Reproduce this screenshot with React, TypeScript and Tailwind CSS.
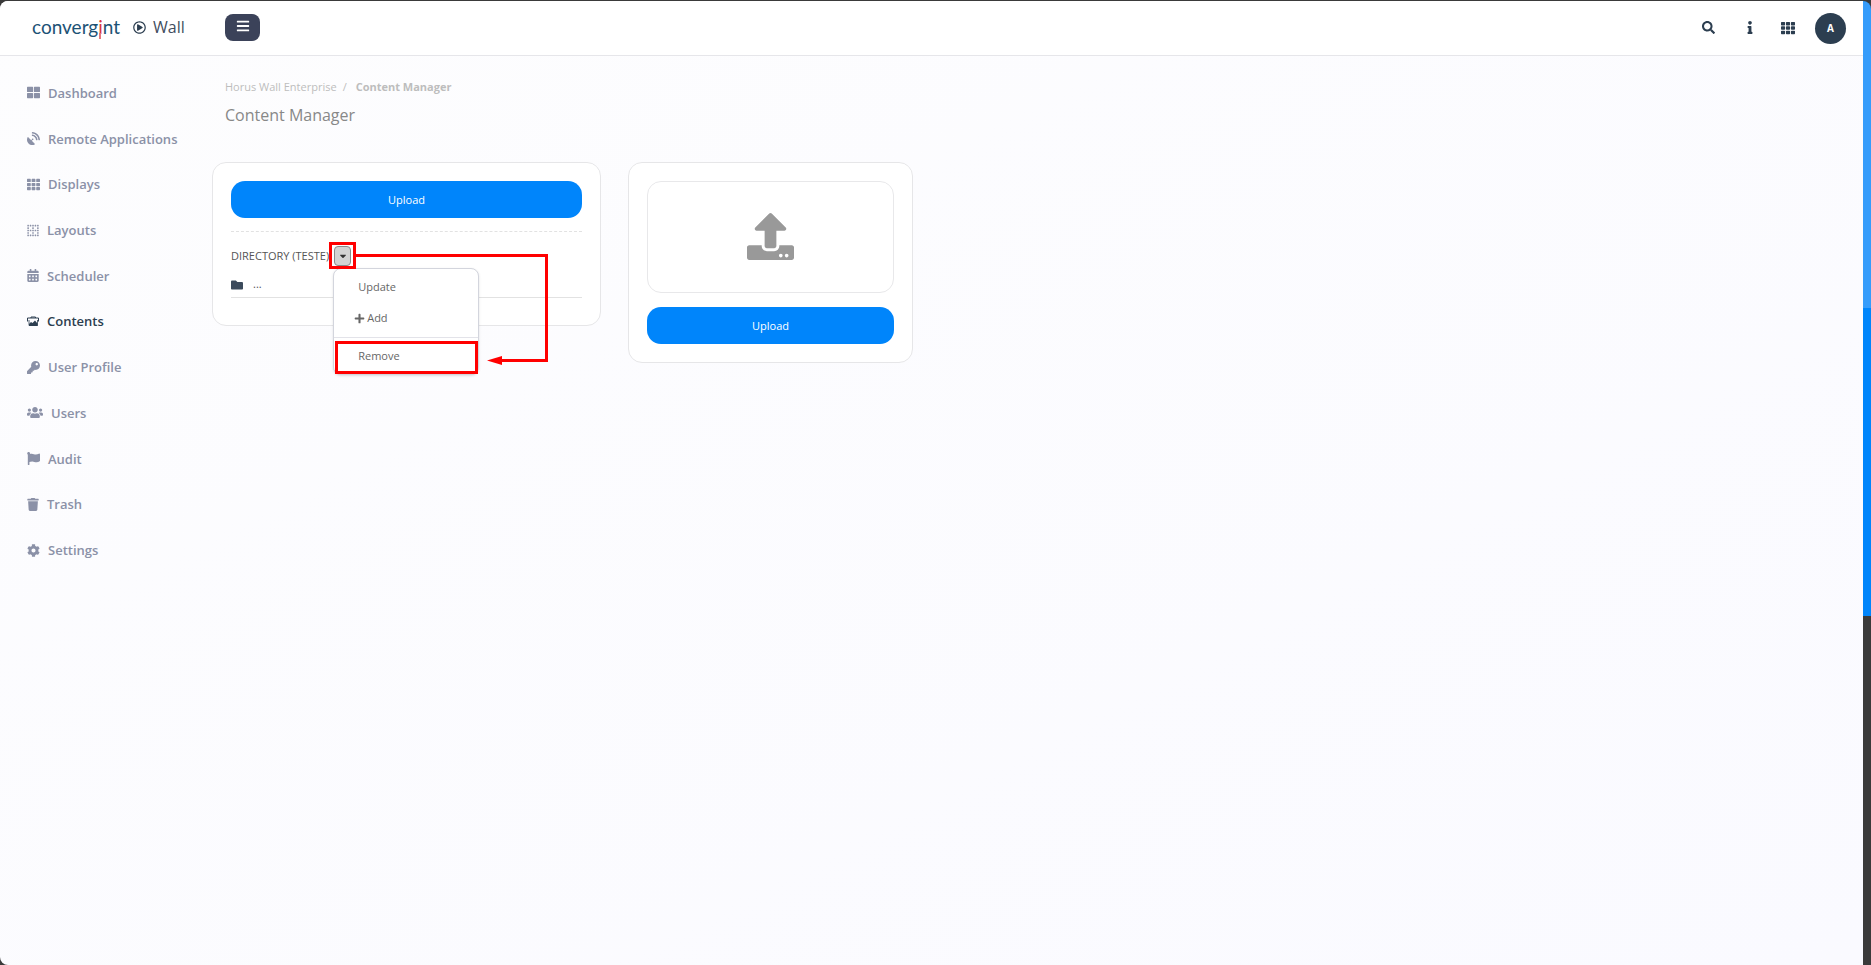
import React from "react";
import type { IconType } from "react-icons";
import {
  FaThLarge,
  FaSatelliteDish,
  FaTh,
  FaBorderNone,
  FaCalendarAlt,
  FaKey,
  FaUsers,
  FaFlag,
  FaTrash,
  FaCog,
  FaSearch,
  FaInfo,
  FaBars,
  FaFolder,
  FaPlus,
  FaUpload,
  FaCaretDown,
  FaRegPlayCircle,
} from "react-icons/fa";

function ContentsIcon({ className }: { className?: string }) {
  return (
    <svg viewBox="0 0 12 12" className={className} fill="none" stroke="currentColor" aria-hidden="true">
      <path d="M4 2.500V1.500h4.500v1" />
      <path d="M.5 6V2.500h11V6" />
      <path d="M2 4.500V10h8.500V4.500" strokeWidth=".8" />
      <path d="M2 10V8.500l2-2 1.500 1 2.500-2.500 2.500 3V10.500H2z" fill="currentColor" stroke="none" />
    </svg>
  );
}

type NavItem = { label: string; icon: IconType | typeof ContentsIcon; size: string; active?: boolean };

const navItems: NavItem[] = [
  { label: "Dashboard", icon: FaThLarge, size: "size-[13px]" },
  { label: "Remote Applications", icon: FaSatelliteDish, size: "size-[13px]" },
  { label: "Displays", icon: FaTh, size: "size-[13px]" },
  { label: "Layouts", icon: FaBorderNone, size: "h-[13px] w-3" },
  { label: "Scheduler", icon: FaCalendarAlt, size: "h-[13px] w-3" },
  { label: "Contents", icon: ContentsIcon, size: "h-[13px] w-3", active: true },
  { label: "User Profile", icon: FaKey, size: "size-[13px]" },
  { label: "Users", icon: FaUsers, size: "h-[13px] w-4" },
  { label: "Audit", icon: FaFlag, size: "size-[13px]" },
  { label: "Trash", icon: FaTrash, size: "h-[13px] w-3" },
  { label: "Settings", icon: FaCog, size: "size-[13px]" },
];

function Header() {
  return (
    <header className="flex h-[55px] items-center border-b border-[#e6e6ea] bg-white text-[#2c3e50]">
      <div className="flex items-center pb-[2px]">
        <a href="#" className="flex w-[225px] items-center pl-8">
          <span className="flex w-[101px] font-[Lato,sans-serif] text-[19px] leading-6 text-[#1c5275]">
            converg
            <span className="relative text-[#d9373f] after:absolute after:bottom-0 after:left-[1px] after:h-[6px] after:w-[2px] after:bg-[#e5757a]">
              i
            </span>
            nt
          </span>
          <FaRegPlayCircle className="size-[13px]" aria-hidden="true" />
          <span className="ml-[7px] text-[16px] leading-6 text-[#3f4d5e]">Wall</span>
        </a>
        <button
          type="button"
          aria-label="Toggle menu"
          className="flex h-[27px] w-[35px] items-center justify-center rounded-lg bg-[#3b4259] pb-[2px] text-white"
        >
          <FaBars className="size-[14px]" />
        </button>
      </div>
      <div className="ml-auto flex items-center pb-px">
        <button type="button" aria-label="Search" className="mr-8">
          <FaSearch className="size-[13px]" />
        </button>
        <button type="button" aria-label="Information" className="mr-7">
          <FaInfo className="h-[13px] w-[6px]" />
        </button>
        <button type="button" aria-label="Applications" className="mr-5">
          <FaTh className="size-[14px]" />
        </button>
      </div>
      <button
        type="button"
        className="mr-[17px] flex size-[31px] items-center justify-center rounded-full bg-[#2c3e50] text-[10px] font-bold text-white"
      >
        A
      </button>
    </header>
  );
}

function Sidebar() {
  return (
    <nav aria-label="Main" className="w-[197px] shrink-0 pt-[14px]">
      <ul className="grid h-[503px] auto-rows-fr">
        {navItems.map(({ label, icon: Icon, size, active }) => (
          <li key={label} className="flex items-center pl-[27px]">
            <a
              href="#"
              className={`flex items-center gap-2 text-[13px] leading-5 font-[550] ${active ? "text-[#2c3e50]" : "text-[#8b91a7]"}`}
            >
              <Icon className={size} aria-hidden="true" />
              {label}
            </a>
          </li>
        ))}
      </ul>
    </nav>
  );
}

function UploadButton() {
  return (
    <button type="button" className="h-[37px] w-full rounded-[14px] bg-[#0085fb] pt-px text-[11px] text-white">
      Upload
    </button>
  );
}

function DirectoryMenu() {
  return (
    <div className="absolute top-[22px] left-[-1px] z-10 w-[146px] rounded-lg border border-[#d3d5dd] bg-white pt-1 text-[11px] text-[#666] shadow-sm">
      <button type="button" className="block h-7 w-full pl-6 text-left">
        Update
      </button>
      <button type="button" className="flex h-[34px] w-full items-center gap-[2px] pl-5 text-left">
        <FaPlus className="size-[11px]" />
        Add
      </button>
      <div className="mt-[2px] border-t border-[#e3e3e9] pt-[3px] pl-px">
        <button type="button" className="block h-[33px] w-full border-3 border-[#ff0000] pb-1 pl-5 text-left">
          Remove
        </button>
      </div>
    </div>
  );
}

function CalloutArrow() {
  return (
    <svg
      viewBox="0 0 220 134"
      className="pointer-events-none absolute top-[-4px] left-[-5px] z-20 h-[134px] w-[220px]"
      fill="none"
      stroke="#ff0000"
      strokeWidth="3"
      aria-hidden="true"
    >
      <rect x="1.500" y="1.500" width="24" height="24" />
      <path d="M27 13.500H217.500V118.500H172" />
      <path d="M158 118.500l15-4.500v9z" fill="#ff0000" stroke="none" />
    </svg>
  );
}

function DirectoryCard() {
  return (
    <section className="h-fit w-[389px] max-w-full rounded-[14px] border border-[#e6e6e8] bg-white px-[18px] pt-[18px] pb-[27px]">
      <UploadButton />
      <div className="mt-[13px] border-t border-dashed border-[#e2e2e2]" />
      <div className="mt-[14px] flex items-center gap-[5px] text-[11px] leading-5 text-[#555]">
        <h2>DIRECTORY (TESTE)</h2>
        <div className="relative">
          <button
            type="button"
            aria-label="Directory actions"
            className="flex h-5 w-[17px] items-center justify-center rounded-[4px] border border-[#8a8a8a] bg-[#d3d3d3] text-[#333]"
          >
            <FaCaretDown className="size-[10px]" />
          </button>
          <DirectoryMenu />
          <CalloutArrow />
        </div>
      </div>
      <a
        href="#"
        className="mt-2 flex h-6 items-center gap-[10px] border-b border-[#e2e2e2] pb-[2px] text-[11px] text-[#555]"
      >
        <FaFolder className="size-3 text-[#3b4a5c]" />
        ...
      </a>
    </section>
  );
}

function DropCard() {
  return (
    <section className="flex h-fit w-[285px] max-w-full flex-col gap-[14px] rounded-[14px] border border-[#e6e6e8] bg-white p-[18px]">
      <div className="flex h-28 items-center justify-center rounded-[14px] border border-[#e8e8ea] pb-[2px]">
        <FaUpload className="size-[47px] text-[#999]" />
      </div>
      <UploadButton />
    </section>
  );
}

export default function App() {
  return (
    <div className="flex min-h-screen bg-[#3a3a3a] pt-px font-['Open_Sans',sans-serif]">
      <div className="flex grow flex-col overflow-hidden rounded-l-lg bg-linear-to-br from-[#fdfdfe] to-[#fafaff]">
        <Header />
        <div className="flex grow">
          <Sidebar />
          <main className="grow pt-[21px] pl-[15px]">
            <nav aria-label="Breadcrumb" className="flex gap-[6px] pl-[13px] text-[11px] leading-5 text-[#bdbdbd]">
              <a href="#">Horus Wall Enterprise</a>
              <span>/</span>
              <span className="ml-[3px] font-bold">Content Manager</span>
            </nav>
            <h1 className="mt-1 pl-[13px] text-[16px] leading-7 text-[#888]">Content Manager</h1>
            <div className="mt-[33px] flex flex-wrap gap-[27px]">
              <DirectoryCard />
              <DropCard />
            </div>
          </main>
        </div>
      </div>
      <div className="flex w-2 shrink-0 flex-col overflow-hidden rounded-tr-lg">
        <div className="h-[307px] bg-[#359cfb]" />
        <div className="h-[308px] bg-[#0085fb]" />
      </div>
    </div>
  );
}
